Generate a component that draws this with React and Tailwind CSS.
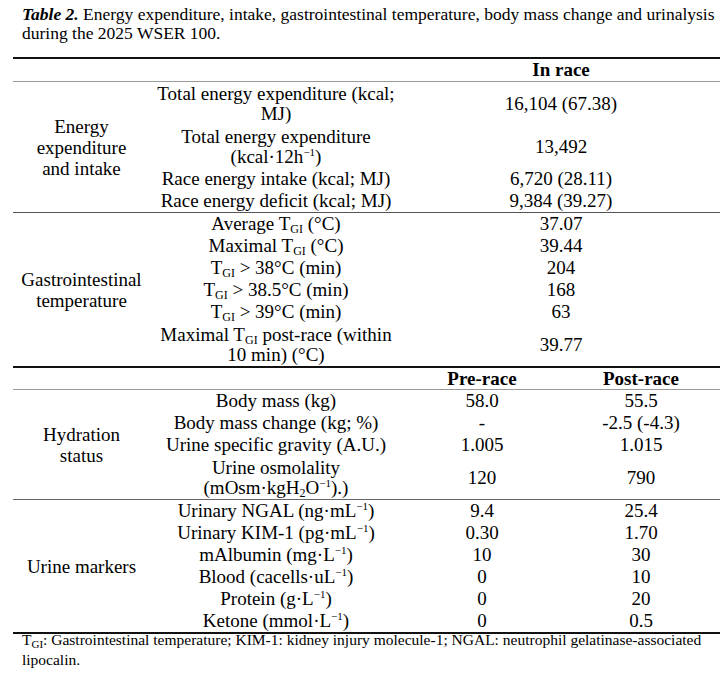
import React from "react";

const GI = () => (
  <>
    T<span className="relative top-[3px] text-[12px] leading-none">GI</span>
  </>
);
const Inv = () => (
  <span className="relative top-[-7px] text-[11px] leading-none">−1</span>
);

function Cell({ h, className = "", children }) {
  return (
    <div className={`${h} flex items-center justify-center text-center leading-[20px] ${className}`}>
      <div>{children}</div>
    </div>
  );
}

function RowCells({ h = "h-[22px]", label, a, b, span }) {
  return (
    <>
      <Cell h={h} className="col-start-2">{label}</Cell>
      {span ? (
        <Cell h={h} className="col-span-2">{a}</Cell>
      ) : (
        <>
          <Cell h={h}>{a}</Cell>
          <Cell h={h}>{b}</Cell>
        </>
      )}
    </>
  );
}

function Section({ label, rows, border }) {
  return (
    <div className={`grid grid-cols-[137px_252px_160px_158px] ${border}`}>
      <div
        className="flex items-center justify-center text-center leading-[21px] px-[8px]"
        style={{ gridRow: `1 / span ${rows.length}`, gridColumn: "1" }}
      >
        <div>{label}</div>
      </div>
      {rows.map((r, i) => (
        <RowCells key={i} {...r} />
      ))}
    </div>
  );
}

export default function App() {
  const energy = [
    { h: "h-[43px]", label: <>Total energy expenditure (kcal;<br />MJ)</>, a: "16,104 (67.38)", span: true },
    { h: "h-[43px]", label: <>Total energy expenditure<br />(kcal·12h<Inv />)</>, a: "13,492", span: true },
    { label: "Race energy intake (kcal; MJ)", a: "6,720 (28.11)", span: true },
    { label: "Race energy deficit (kcal; MJ)", a: "9,384 (39.27)", span: true },
  ];
  const gastro = [
    { label: <>Average <GI /> (°C)</>, a: "37.07", span: true },
    { label: <>Maximal <GI /> (°C)</>, a: "39.44", span: true },
    { label: <><GI /> &gt; 38°C (min)</>, a: "204", span: true },
    { label: <><GI /> &gt; 38.5°C (min)</>, a: "168", span: true },
    { label: <><GI /> &gt; 39°C (min)</>, a: "63", span: true },
    { h: "h-[43px]", label: <>Maximal <GI /> post-race (within<br />10 min) (°C)</>, a: "39.77", span: true },
  ];
  const hydration = [
    { label: "Body mass (kg)", a: "58.0", b: "55.5" },
    { label: "Body mass change (kg; %)", a: "-", b: "-2.5 (-4.3)" },
    { label: "Urine specific gravity (A.U.)", a: "1.005", b: "1.015" },
    {
      h: "h-[43px]",
      label: (
        <>
          Urine osmolality
          <br />
          (mOsm·kgH<span className="relative top-[3px] text-[12px] leading-none">2</span>O<Inv />).)
        </>
      ),
      a: "120",
      b: "790",
    },
  ];
  const urine = [
    { label: <>Urinary NGAL (ng·mL<Inv />)</>, a: "9.4", b: "25.4" },
    { label: <>Urinary KIM-1 (pg·mL<Inv />)</>, a: "0.30", b: "1.70" },
    { label: <>mAlbumin (mg·L<Inv />)</>, a: "10", b: "30" },
    { label: <>Blood (cacells·uL<Inv />)</>, a: "0", b: "10" },
    { label: <>Protein (g·L<Inv />)</>, a: "0", b: "20" },
    { label: <>Ketone (mmol·L<Inv />)</>, a: "0", b: "0.5" },
  ];

  return (
    <div className="w-[728px] h-[674px] bg-white text-black font-['Liberation_Serif',serif] text-[19px]">
      <div className="pl-[22px] pr-[8px] pt-[5px] leading-[19px] text-[17.5px]">
        <span className="font-bold italic">Table 2.</span> Energy expenditure, intake, gastrointestinal temperature, body mass change and urinalysis during the 2025 WSER 100.
      </div>
      <div className="ml-[13px] w-[707px] mt-[14px]">
        <div className="border-t-2 border-[#111]" />
        <div className="grid grid-cols-[137px_252px_160px_158px] h-[23px] border-b border-[#999]">
          <div />
          <div />
          <div className="col-span-2 flex items-center justify-center font-bold leading-[20px]">In race</div>
        </div>
        <Section label={<>Energy expenditure and intake</>} rows={energy} border="border-b border-[#555]" />
        <Section label={<>Gastrointestinal temperature</>} rows={gastro} border="border-b-2 border-[#111]" />
        <div className="grid grid-cols-[137px_252px_160px_158px] h-[22px] border-b border-[#999]">
          <div />
          <div />
          <div className="flex items-center justify-center font-bold leading-[20px]">Pre-race</div>
          <div className="flex items-center justify-center font-bold leading-[20px]">Post-race</div>
        </div>
        <Section label={<>Hydration status</>} rows={hydration} border="border-b border-[#666]" />
        <Section label={<>Urine markers</>} rows={urine} border="border-b-2 border-[#111]" />
      </div>
      <div className="pl-[22px] pr-[4px] -mt-[4px] text-[15.5px] leading-[20px]">
        T<span className="relative top-[3px] text-[11px] leading-none">GI</span>: Gastrointestinal temperature; KIM-1: kidney injury molecule-1; NGAL: neutrophil gelatinase-associated lipocalin.
      </div>
    </div>
  );
}
